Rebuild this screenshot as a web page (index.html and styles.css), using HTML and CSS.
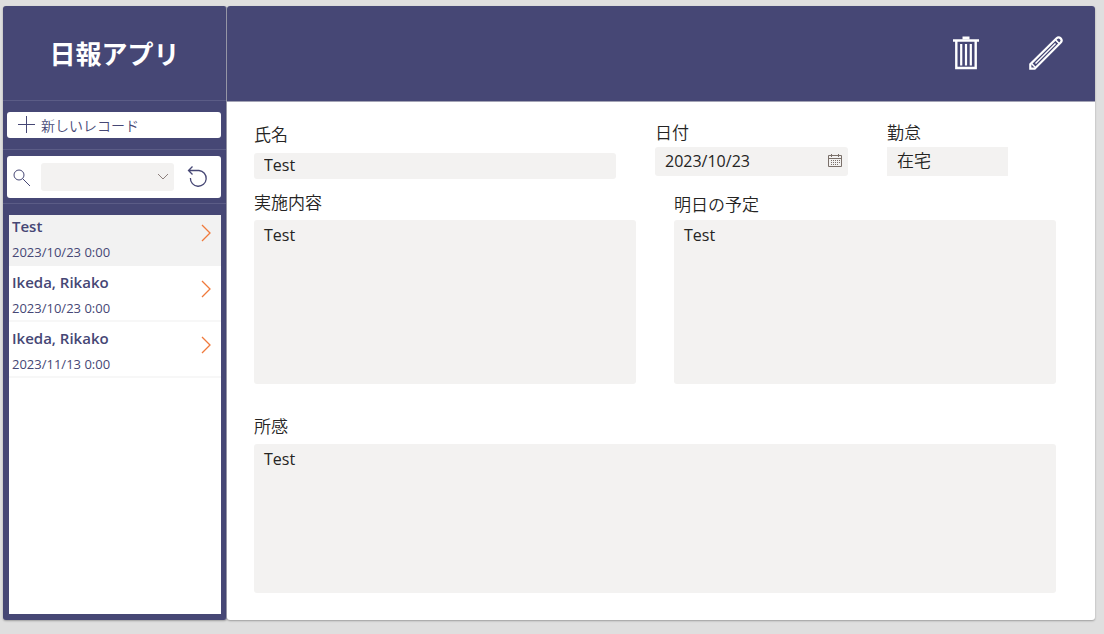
FILE: index.html
```html
<!DOCTYPE html>
<html lang="ja">
<head>
	<meta charset="utf-8">
	<meta name="viewport" content="width=device-width, initial-scale=1">
	<title>日報アプリ</title>
	<link rel="stylesheet" href="styles.css">
</head>
<body>
	<div class="app">
		<aside class="sidebar">
			<div class="boxTitle">
				<h1>日報アプリ</h1>
			</div>
			<div class="boxNew">
				<button type="button" class="btnNew">
					<svg width="18" height="18" viewBox="0 0 18 18"><path d="M8.500 0v17M0 8.500h17"/></svg>
					<span>新しいレコード</span>
				</button>
			</div>
			<div class="boxSearch">
				<div class="searchBar">
					<svg class="iconSearch" width="18" height="18" viewBox="0 0 18 18"><circle cx="6" cy="7" r="5"/><path d="M9.600 10.600L17 18"/></svg>
					<div class="searchSelect">
						<select aria-label="検索"><option></option></select>
						<svg width="12" height="8" viewBox="0 0 12 8"><path d="M1 1l5 5 5-5"/></svg>
					</div>
					<button type="button" class="btnReload" aria-label="再読み込み">
						<svg width="22" height="22" viewBox="0 0 22 22"><path d="M5.500 0.500L1.500 4.500l4 4M1.500 4.500H12a7.900 7.900 0 1 1-8.600 7.500"/></svg>
					</button>
				</div>
			</div>
			<ul class="list">
				<li class="item selected">
					<div>
						<strong>Test</strong>
						<span>2023/10/23 0:00</span>
					</div>
					<svg width="10" height="18" viewBox="0 0 10 18"><path d="M1 1l8 8-8 8"/></svg>
				</li>
				<li class="item">
					<div>
						<strong>Ikeda, Rikako</strong>
						<span>2023/10/23 0:00</span>
					</div>
					<svg width="10" height="18" viewBox="0 0 10 18"><path d="M1 1l8 8-8 8"/></svg>
				</li>
				<li class="item">
					<div>
						<strong>Ikeda, Rikako</strong>
						<span>2023/11/13 0:00</span>
					</div>
					<svg width="10" height="18" viewBox="0 0 10 18"><path d="M1 1l8 8-8 8"/></svg>
				</li>
			</ul>
		</aside>
		<main class="main">
			<header class="toolbar">
				<button type="button" class="btnIcon" aria-label="削除">
					<svg width="26" height="34" viewBox="0 0 26 34">
						<path d="M0 4.500h26M3.300 4.500v27.500h19.400V4.500" stroke-width="2.400"/>
						<path d="M9.500 2h7" stroke-width="3"/>
						<path d="M8.200 8v21.500M13 8v21.500M17.800 8v21.500" stroke-width="2.200"/>
					</svg>
				</button>
				<button type="button" class="btnIcon" aria-label="編集">
					<svg width="34" height="34" viewBox="0 0 34 34">
						<path d="M1.300 32.700V28.300L27.600 2.300a2.900 2.900 0 0 1 4.100 4.100L5.700 32.700z" stroke-width="2.200"/>
						<path d="M6.500 27.500L26.500 7.500" stroke-width="1.500"/>
						<path d="M2.300 27.300l4.400 4.400M26.300 3.600l4.100 4.100" stroke-width="1.500"/>
					</svg>
				</button>
			</header>
			<form class="form">
				<div class="rowTop">
					<div class="field fieldName">
						<label for="name">氏名</label>
						<input id="name" type="text" value="Test" readonly>
					</div>
					<div class="field">
						<label for="date">日付</label>
						<div class="dateBox">
							<input id="date" type="text" value="2023/10/23" readonly>
							<svg width="14" height="13" viewBox="0 0 14 13"><path d="M.5 1.500h13v11H.5zM.5 4.500h13M3.500 0v3M10.500 0v3"/><path class="dots" d="M3 6.500h9M3 8.500h9M3 10.500h7"/></svg>
						</div>
					</div>
					<div class="field fieldWork">
						<label for="work">勤怠</label>
						<input id="work" type="text" value="在宅" readonly>
					</div>
				</div>
				<div class="rowMiddle">
					<div class="field">
						<label for="done">実施内容</label>
						<textarea id="done" readonly>Test</textarea>
					</div>
					<div class="field fieldPlan">
						<label for="plan">明日の予定</label>
						<textarea id="plan" readonly>Test</textarea>
					</div>
				</div>
				<div class="field fieldNote">
					<label for="note">所感</label>
					<textarea id="note" readonly>Test</textarea>
				</div>
			</form>
		</main>
	</div>
</body>
</html>
```
FILE: styles.css
```css
* {
	box-sizing: border-box;
}
body {
	margin: 0;
	background: #dfdfdf;
	color: #252423;
	font-family: "Open Sans", "Noto Sans CJK JP", sans-serif;
	font-size: 16px;
}
h1, ul {
	margin: 0;
	padding: 0;
}
button, input, select, textarea {
	margin: 0;
	border: none;
	outline: none;
	color: inherit;
	font: inherit;
}
button {
	background: none;
	cursor: pointer;
}
svg {
	display: block;
	flex: none;
	fill: none;
	stroke: currentColor;
}

.app {
	display: flex;
	min-height: 100vh;
	padding: 6px 9px 14px 3px;
}

/* sidebar */
.sidebar {
	display: flex;
	flex-direction: column;
	width: 224px;
	flex: none;
	background: #464775;
	color: #464775;
	border-right: 1px solid #a3a3b5;
	border-radius: 3px;
	box-shadow: 0 1px 2px rgba(0, 0, 0, .3);
}
.boxTitle {
	display: flex;
	align-items: center;
	justify-content: center;
	height: 95px;
	padding-top: 2px;
	border-bottom: 1px solid #5b5c86;
}
.boxTitle h1 {
	color: #fff;
	font-size: 26px;
	line-height: 36px;
}
.boxNew {
	padding: 11px 5px 11px 4px;
	border-bottom: 1px solid #5b5c86;
}
.btnNew {
	display: flex;
	align-items: center;
	gap: 5px;
	width: 100%;
	height: 26px;
	padding: 0 11px;
	background: #fff;
	border-radius: 3px;
	font-size: 14px;
	font-weight: 350;
}
.boxSearch {
	padding: 6px 5px 5px 4px;
	border-bottom: 1px solid #5b5c86;
}
.searchBar {
	display: flex;
	align-items: center;
	height: 42px;
	padding: 0 12px 0 6px;
	background: #fff;
	border-radius: 3px;
}
.searchSelect {
	position: relative;
	flex: 1;
	margin: 0 13px 0 10px;
}
.searchSelect select {
	display: block;
	width: 100%;
	height: 28px;
	background: #f3f2f1;
	border-radius: 3px;
	appearance: none;
}
.searchSelect svg {
	position: absolute;
	top: 10px;
	right: 5px;
	color: #8c7f7c;
	pointer-events: none;
}
.btnReload {
	padding: 0;
}
.btnReload svg {
	stroke-width: 1.3;
}
.list {
	flex: 1;
	margin: 11px 5px 6px 6px;
	background: #fff;
	list-style: none;
}
.item {
	display: flex;
	justify-content: space-between;
	padding: 6px 10px 2px 3px;
	border-bottom: 2px solid #f7f7f7;
}
.item.selected {
	padding-top: 1px;
	padding-bottom: 4px;
	background: #f2f2f2;
	border-bottom: none;
}
.item strong, .item span {
	display: block;
	line-height: 20px;
}
.item strong {
	margin-bottom: 6px;
	font-size: 15px;
	font-weight: 600;
}
.item span {
	font-size: 13px;
}
.item svg {
	margin-top: 8px;
	color: #f07a3c;
	stroke-width: 1.3;
}

/* main */
.main {
	display: flex;
	flex-direction: column;
	flex: 1;
	min-width: 0;
	background: #fff;
	border-radius: 3px;
	box-shadow: 0 1px 2px rgba(0, 0, 0, .3);
}
.toolbar {
	display: flex;
	align-items: center;
	justify-content: flex-end;
	gap: 50px;
	height: 96px;
	padding: 0 32px 2px 0;
	background: #464775;
	border-bottom: 1px solid #a3a3b5;
	border-radius: 3px 3px 0 0;
	color: #fff;
}
.btnIcon {
	padding: 0;
}
.form {
	display: flex;
	flex-direction: column;
	flex: 1;
	padding: 19px 39px 27px 27px;
}
.rowTop {
	display: grid;
	grid-template-columns: 362fr 193fr 121fr;
	gap: 39px;
	padding-right: 48px;
}
.rowMiddle {
	display: grid;
	grid-template-columns: 1fr 1fr;
	gap: 38px;
	margin: 12px 0 31px;
}
.field {
	display: flex;
	flex-direction: column;
	min-width: 0;
}
.field label {
	align-self: flex-start;
	font-size: 17px;
	font-weight: 350;
	line-height: 24px;
}
.field input, .field textarea {
	width: 100%;
	padding: 0 10px;
	background: #f3f2f1;
	border-radius: 3px;
}
.field input {
	height: 29px;
	margin-top: 2px;
	padding-bottom: 2px;
}
.field textarea {
	display: block;
	height: 164px;
	margin-top: 5px;
	padding: 4px 10px;
	line-height: 22px;
	resize: none;
}
.fieldName {
	padding-top: 2px;
}
.fieldName input {
	height: 26px;
	margin-top: 6px;
}
.fieldWork input {
	padding-bottom: 4px;
	border-radius: 0;
	font-size: 17px;
	font-weight: 350;
}
.fieldPlan {
	padding-top: 2px;
}
.fieldPlan textarea {
	margin-top: 3px;
}
.fieldNote {
	flex: 1;
}
.fieldNote textarea {
	flex: 1;
	min-height: 149px;
}
.dateBox {
	position: relative;
}
.dateBox svg {
	position: absolute;
	right: 6px;
	bottom: 9px;
	color: #7a706a;
}
.dateBox .dots {
	stroke-dasharray: 1 1;
}
```
